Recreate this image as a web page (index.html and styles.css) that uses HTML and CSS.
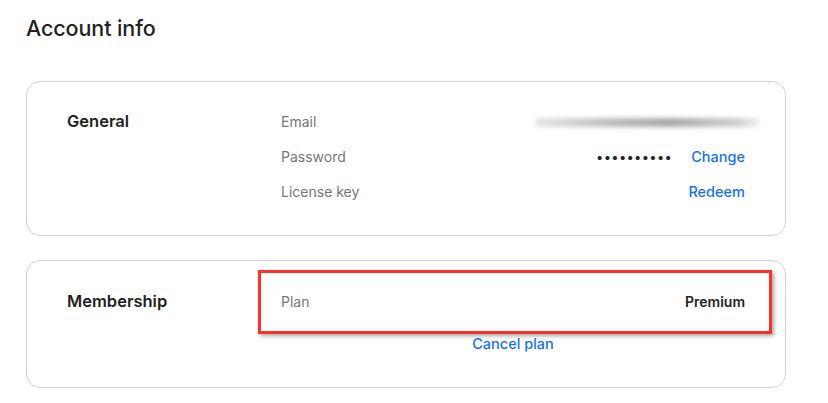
FILE: index.html
```html
<!DOCTYPE html>
<html>
<head>
<meta charset="utf-8">
<link rel="stylesheet" href="styles.css">
</head>
<body>
<div class="page">
  <h1 class="title">Account info</h1>
  <section class="card card-general">
    <h2 class="card-title">General</h2>
    <div class="rows">
      <div class="row">
        <span class="label">Email</span>
        <span class="value"><span class="blurred"></span></span>
      </div>
      <div class="row">
        <span class="label">Password</span>
        <span class="value"><span class="dots">••••••••••</span><a class="link">Change</a></span>
      </div>
      <div class="row">
        <span class="label">License key</span>
        <span class="value"><a class="link">Redeem</a></span>
      </div>
    </div>
  </section>
  <section class="card card-membership">
    <h2 class="card-title">Membership</h2>
    <div class="rows">
      <div class="row highlighted">
        <span class="label">Plan</span>
        <span class="value strong">Premium</span>
        <span class="highlight"></span>
      </div>
      <div class="row center">
        <a class="link">Cancel plan</a>
      </div>
    </div>
  </section>
</div>
</body>
</html>
```
FILE: styles.css
```css
html, body {
  margin: 0;
  padding: 0;
  background: #fff;
}
body {
  font-family: "Inter", "Noto Sans", sans-serif;
  color: #222;
}
.page {
  padding: 0 42px 0 26px;
}
.title {
  margin: 0;
  padding-top: 14px;
  height: 81px;
  box-sizing: border-box;
  font-size: 21.5px;
  font-weight: 500;
  line-height: 28px;
  letter-spacing: -0.1px;
  color: #222;
}
.card {
  border: 1px solid #d2d2d2;
  border-radius: 14px;
  display: flex;
  padding: 22px 40px 0 40px;
  box-sizing: border-box;
}
.card-general {
  height: 155px;
}
.card-membership {
  margin-top: 24px;
  height: 128px;
}
.card-title {
  margin: 0;
  width: 214px;
  flex: none;
  font-size: 16.5px;
  font-weight: 600;
  line-height: 35px;
  height: 35px;
  color: #222;
}
.card-membership .card-title {
  margin-top: 1px;
}
.rows {
  flex: 1;
  display: flex;
  flex-direction: column;
}
.row {
  display: flex;
  align-items: center;
  justify-content: space-between;
  height: 35px;
  font-size: 14px;
  position: relative;
}
.card-membership .row.highlighted {
  margin-top: 1px;
}
.row.center {
  justify-content: center;
  margin-top: 7px;
}
.label {
  color: #777;
}
.value {
  display: flex;
  align-items: center;
}
.strong {
  font-weight: 600;
  color: #222;
}
.link {
  color: #1672e6;
  font-weight: 500;
  font-size: 14.5px;
  cursor: pointer;
}
.dots {
  color: #222;
  font-size: 13px;
  letter-spacing: 0.3px;
  margin-right: 19px;
}
.blurred {
  display: block;
  width: 225px;
  height: 9px;
  margin-right: -15px;
  margin-top: 2px;
  border-radius: 4px;
  background: linear-gradient(90deg, #e6e6e6 0%, #bdbdbd 35%, #a9a9a9 60%, #cfcfcf 90%, #f0f0f0 100%);
  filter: blur(2px);
}
.highlight {
  position: absolute;
  left: -23px;
  right: -27px;
  top: -14px;
  bottom: -15px;
  border: 3px solid #ff3126;
  box-shadow: 2px 2px 4px rgba(0, 0, 0, 0.35);
  pointer-events: none;
}
```
